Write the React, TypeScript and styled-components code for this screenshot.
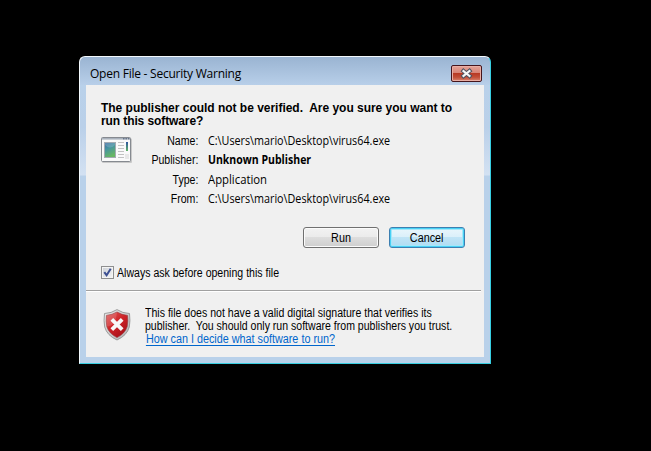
import React from 'react';
import styled, { createGlobalStyle, css } from 'styled-components';

const Global = createGlobalStyle`
  body { margin: 0; background: #000; overflow: hidden; }
  * { box-sizing: border-box; }
`;

const Desktop = styled.main`
  width: 651px;
  height: 451px;
  background: #000;
  padding: 56px 0 0 79px;
  font: 12px/13px "Liberation Sans", Arial, sans-serif;
  color: #000;
`;

const Dialog = styled.section`
  width: 412px;
  height: 308px;
  padding: 0 6px 6px;
  border: 1px solid #38cfe2;
  border-top-color: #f3f9fd;
  border-left-color: #f3f9fd;
  border-radius: 6px 6px 0 0;
  background:
    linear-gradient(#9ab4d2, #b8cfe9 28px, transparent 28px),
    linear-gradient(#b9d1ea 28px, #bad0e9 70px, #d3e1f2 118px, #b9d1ea 119px);
`;

const TitleBar = styled.header`
  display: flex;
  align-items: flex-start;
  justify-content: space-between;
  height: 28px;
  padding: 8px 2px 0 4px;
`;

const Title = styled.h1`
  margin: 2px 0 0;
  font: 12px/13px "Open Sans", sans-serif;
  letter-spacing: -0.24px;
`;

const CloseButton = styled.button`
  display: flex;
  align-items: center;
  justify-content: center;
  width: 31px;
  height: 17px;
  padding: 0;
  border: 1px solid #45151c;
  border-radius: 2px;
  box-shadow: inset 0 0 0 1px #e9aea4;
  background: linear-gradient(#e5a397, #d78476 46%, #b83a24 50%, #c24f38 75%, #d98571);
`;

const Client = styled.div`
  height: 272px;
  background: #f0f0f0;
`;

const Heading = styled.h2`
  height: 49px;
  margin: 0;
  padding: 17px 0 0 15px;
  font-size: 12px;
  line-height: 13px;
  white-space: pre;
`;

const HeadingLine = styled.span<{ $spacing: number }>`
  display: block;
  letter-spacing: ${p => p.$spacing}px;
`;

const Details = styled.div`
  display: flex;
  height: 93px;
  padding-left: 15px;
`;

const IconSlot = styled.div`
  width: 32px;
  padding-top: 3px;
`;

const Fields = styled.dl`
  display: grid;
  grid-template-columns: 65px auto;
  grid-template-rows: 19px 20px 19px 19px;
  column-gap: 10px;
  align-content: start;
  margin: 0;
`;

const Label = styled.dt`
  padding-top: 1px;
  text-align: right;
`;

const Value = styled.dd<{ $strong?: boolean }>`
  margin: 0;
  font: ${p => (p.$strong ? 700 : 400)} 12px/13px "Open Sans", sans-serif;
`;

const Narrow = styled.span<{ $scale: number; $origin?: string }>`
  display: inline-block;
  white-space: pre;
  transform: scaleX(${p => p.$scale});
  transform-origin: ${p => p.$origin ?? 'left'} center;
`;

const Actions = styled.div`
  display: flex;
  justify-content: flex-end;
  gap: 10px;
  padding-right: 19px;
  height: 39px;
`;

const focused = css`
  border-color: #3c7fb1;
  box-shadow: inset 0 0 0 1px #48d1f5, inset 0 0 0 2px #a5e7fa;
  background: linear-gradient(#eaf6fc, #daf0fa 49%, #c0e4f6 50%, #afdcf2);
`;

const PushButton = styled.button<{ $focused?: boolean }>`
  width: 76px;
  height: 21px;
  padding: 1px 0 0;
  border: 1px solid #707070;
  border-radius: 3px;
  box-shadow: inset 0 0 0 1px #fbfbfb;
  background: linear-gradient(#f2f2f2, #ebebeb 49%, #dddddd 50%, #cfcfcf);
  font: 12px/13px "Liberation Sans", Arial, sans-serif;
  color: #000;
  ${p => p.$focused && focused}
`;

const AskRow = styled.label`
  display: flex;
  gap: 3px;
  height: 24px;
  padding-left: 15px;
`;

const AskText = styled.span`
  padding-top: 1px;
`;

const CheckBox = styled.span`
  width: 13px;
  height: 13px;
  border: 1px solid #8e8f8f;
  box-shadow: inset 0 0 0 1px #f4f4f4;
  background: linear-gradient(135deg, #cbcfd5, #f6f6f6);
  svg { display: block; }
`;

const Divider = styled.hr`
  width: 395px;
  height: 2px;
  margin: 0;
  border: 0;
  border-top: 1px solid #a0a0a0;
  background: #fff;
`;

const Notice = styled.footer`
  display: flex;
  padding: 15px 0 0 17px;
  gap: 14px;
`;

const ShieldSlot = styled.div`
  width: 28px;
  padding-top: 2px;
`;

const NoticeText = styled.p`
  display: flex;
  flex-direction: column;
  align-items: flex-start;
  margin: 0;
`;

const HelpLink = styled.a`
  margin-left: 1px;
  color: #0066cc;
  text-decoration: underline;
  text-underline-offset: 1.5px;
`;

const ProgramIcon = () => (
  <svg width="32" height="28" viewBox="0 0 32 28" display="block">
    <defs>
      <linearGradient id="pane" x1="0" y1="0" x2=".4" y2="1">
        <stop offset="0" stopColor="#3e6aa5" />
        <stop offset=".45" stopColor="#4694a0" />
        <stop offset="1" stopColor="#68b763" />
      </linearGradient>
      <linearGradient id="strip" x1="0" y1="0" x2="0" y2="1">
        <stop offset="0" stopColor="#2e549f" />
        <stop offset="1" stopColor="#62b565" />
      </linearGradient>
    </defs>
    <rect x="1" y="1.5" width="30" height="24.5" rx="1" fill="#000" opacity=".16" />
    <rect x=".5" y=".5" width="29" height="24" rx="1" fill="#fafafa" stroke="#868a90" />
    <rect x="1" y="1" width="28" height="1.6" fill="#a9b1bc" />
    <path d="M22 1.8h1.5M24.5 1.8H26M27 1.8h1.3" stroke="#4c5a75" />
    <rect x="3.5" y="5.5" width="11" height="15" fill="url(#pane)" stroke="#a4abb2" />
    <path d="M4 8Q9 13 14 8V6H4Z" fill="#fff" opacity=".16" />
    <path d="M17 5.5h6M17 8.5h6M17 11.5h6M17 14.5h6M17 17.5h6M17 20.5h6" stroke="#c2c2c2" />
    <rect x="25" y="5" width="2" height="9" fill="url(#strip)" />
    <rect x="24" y="17" width="4" height="5" fill="#e8e8e8" />
  </svg>
);

const ShieldIcon = () => (
  <svg width="28" height="32" viewBox="0 0 28 32" display="block">
    <defs>
      <linearGradient id="red" x1="0" y1="0" x2=".7" y2="1">
        <stop offset="0" stopColor="#e05a58" />
        <stop offset=".5" stopColor="#ce2428" />
        <stop offset="1" stopColor="#a80f18" />
      </linearGradient>
      <linearGradient id="rim" x1="0" y1="0" x2="1" y2="1">
        <stop offset="0" stopColor="#e9e9e9" />
        <stop offset="1" stopColor="#b1b1b1" />
      </linearGradient>
    </defs>
    <path d="M14 .6Q19.5 4.2 26.5 4.5Q27.5 12 26.3 18Q24 26.5 14 31Q4 26.5 1.7 18Q.5 12 1.5 4.5Q8.5 4.2 14 .6Z" fill="url(#rim)" stroke="#8b8b8b" strokeWidth=".8" />
    <path d="M14 3Q19 6 24.5 6.4Q25.2 12 24.2 17.5Q22 24.6 14 28.6Q6 24.6 3.8 17.5Q2.8 12 3.5 6.4Q9 6 14 3Z" fill="url(#red)" stroke="#953338" strokeWidth=".6" />
    <path d="M14 3Q9 6 3.5 6.4Q2.8 12 3.8 17.5Q13 17 14 3Z" fill="#fff" opacity=".15" />
    <path d="M8.8 10.3l10.4 10.4M19.2 10.3L8.8 20.7" stroke="#f7f7f7" strokeWidth="3.8" />
  </svg>
);

const CloseGlyph = () => (
  <svg width="13" height="11" viewBox="0 0 13 11">
    <path d="M3.5 3l6 5M9.5 3l-6 5" stroke="#4e5361" strokeWidth="4.2" strokeLinecap="square" />
    <path d="M3.5 3l6 5M9.5 3l-6 5" stroke="#f5f5f5" strokeWidth="2.2" strokeLinecap="square" />
  </svg>
);

const fields = [
  { label: 'Name:', value: 'C:\\Users\\mario\\Desktop\\virus64.exe', scale: 0.897 },
  { label: 'Publisher:', value: 'Unknown Publisher', scale: 0.876, strong: true },
  { label: 'Type:', value: 'Application', scale: 0.943 },
  { label: 'From:', value: 'C:\\Users\\mario\\Desktop\\virus64.exe', scale: 0.897 },
];

export default function App() {
  return (
    <Desktop>
      <Global />
      <Dialog>
        <TitleBar>
          <Title>Open File - Security Warning</Title>
          <CloseButton aria-label="Close"><CloseGlyph /></CloseButton>
        </TitleBar>
        <Client>
          <Heading>
            <HeadingLine $spacing={-0.02}>The publisher could not be verified.  Are you sure you want to</HeadingLine>
            <HeadingLine $spacing={-0.1}>run this software?</HeadingLine>
          </Heading>
          <Details>
            <IconSlot><ProgramIcon /></IconSlot>
            <Fields>
              {fields.map(f => (
                <React.Fragment key={f.label}>
                  <Label><Narrow $scale={0.88} $origin="right">{f.label}</Narrow></Label>
                  <Value $strong={f.strong}><Narrow $scale={f.scale}>{f.value}</Narrow></Value>
                </React.Fragment>
              ))}
            </Fields>
          </Details>
          <Actions>
            <PushButton><Narrow $scale={0.9} $origin="center">Run</Narrow></PushButton>
            <PushButton $focused><Narrow $scale={0.9} $origin="center">Cancel</Narrow></PushButton>
          </Actions>
          <AskRow>
            <CheckBox>
              <svg width="11" height="11" viewBox="0 0 11 11">
                <path d="M2.3 5.2L4.6 8.2L8.7 1.8" fill="none" stroke="#3c4f91" strokeWidth="2" />
              </svg>
            </CheckBox>
            <AskText><Narrow $scale={0.88}>Always ask before opening this file</Narrow></AskText>
          </AskRow>
          <Divider />
          <Notice>
            <ShieldSlot><ShieldIcon /></ShieldSlot>
            <NoticeText>
              <Narrow $scale={0.881}>This file does not have a valid digital signature that verifies its</Narrow>
              <Narrow $scale={0.879}>publisher.  You should only run software from publishers you trust.</Narrow>
              <Narrow $scale={0.9}><HelpLink>How can I decide what software to run?</HelpLink></Narrow>
            </NoticeText>
          </Notice>
        </Client>
      </Dialog>
    </Desktop>
  );
}
